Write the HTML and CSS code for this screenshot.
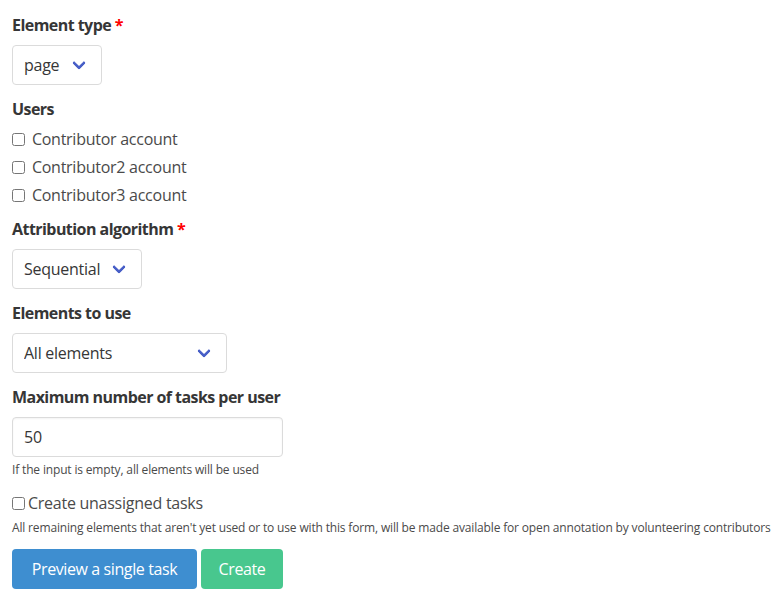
FILE: index.html
```html
<!DOCTYPE html>
<html lang="en">
<head>
<meta charset="utf-8">
<title>Create tasks</title>
<link rel="stylesheet" href="styles.css">
</head>
<body>
<form class="form">
  <div class="field">
    <label class="label">Element type <span class="req">*</span></label>
    <div class="select sel-type"><select><option>page</option></select></div>
  </div>

  <div class="field field-users">
    <label class="label label-tight">Users</label>
    <div class="checks">
      <label class="check"><input type="checkbox"> Contributor account</label>
      <label class="check"><input type="checkbox"> Contributor2 account</label>
      <label class="check"><input type="checkbox"> Contributor3 account</label>
    </div>
  </div>

  <div class="field">
    <label class="label">Attribution algorithm <span class="req">*</span></label>
    <div class="select sel-algo"><select><option>Sequential</option></select></div>
  </div>

  <div class="field">
    <label class="label">Elements to use</label>
    <div class="select sel-elements"><select><option>All elements</option></select></div>
  </div>

  <div class="field">
    <label class="label">Maximum number of tasks per user</label>
    <input class="input" type="number" value="50">
    <p class="help">If the input is empty, all elements will be used</p>
  </div>

  <div class="field">
    <label class="check check-single"><input type="checkbox">Create unassigned tasks</label>
    <p class="help help-nowrap">All remaining elements that aren't yet used or to use with this form, will be made available for open annotation by volunteering contributors</p>
  </div>

  <div class="buttons">
    <button type="button" class="button is-info">Preview a single task</button>
    <button type="button" class="button is-success">Create</button>
  </div>
</form>
</body>
</html>
```

FILE: styles.css
```css
*, *::before, *::after { box-sizing: border-box; }

body {
  margin: 0;
  background: #fff;
  color: #4a4a4a;
  font-family: "Open Sans", "Noto Sans", sans-serif;
  font-size: 16px;
  line-height: 1.5;
  letter-spacing: -0.26px;
}

.form {
  padding: 13px 12px;
}

.field {
  margin-bottom: 12px;
}

.field-users {
  margin-bottom: 8px;
}

.label {
  display: block;
  color: #363636;
  font-weight: 700;
  font-size: 16px;
  line-height: 24px;
  letter-spacing: -0.55px;
  margin-bottom: 8px;
}

.label-tight {
  margin-bottom: 0;
}

.req {
  color: #f00;
}

.select {
  position: relative;
  display: block;
  height: 40px;
}

.select::after {
  content: "";
  position: absolute;
  top: 50%;
  right: 18px;
  margin-top: -7px;
  width: 10px;
  height: 10px;
  border: 3px solid #485fc7;
  border-right: 0;
  border-top: 0;
  border-radius: 2px;
  transform: rotate(-45deg);
  transform-origin: center;
  pointer-events: none;
}

.select select {
  -webkit-appearance: none;
  appearance: none;
  display: block;
  width: 100%;
  height: 40px;
  margin: 0;
  padding: 0 40px 0 11px;
  border: 1px solid #dbdbdb;
  border-radius: 4px;
  background: #fff;
  color: #363636;
  font-family: inherit;
  font-size: 16px;
  letter-spacing: -0.26px;
  outline: none;
}

.sel-type { width: 90px; }
.sel-algo { width: 130px; }
.sel-elements { width: 215px; }

.checks {
  padding-top: 4px;
}

.check {
  display: flex;
  align-items: center;
  height: 28px;
  color: #4a4a4a;
  white-space: pre;
}

.check input {
  width: 13px;
  height: 13px;
  margin: 0 3px 0 0;
}

.check-single {
  height: 24px;
}

.input {
  display: block;
  width: 271px;
  height: 40px;
  margin: 0;
  padding: 0 11px;
  border: 1px solid #dbdbdb;
  border-radius: 4px;
  background: #fff;
  color: #363636;
  font-family: inherit;
  font-size: 16px;
  letter-spacing: -0.26px;
  box-shadow: inset 0 1px 2px rgba(10, 10, 10, 0.05);
  -moz-appearance: textfield;
}

.input::-webkit-outer-spin-button,
.input::-webkit-inner-spin-button {
  -webkit-appearance: none;
  margin: 0;
}

.help {
  margin: 4px 0 0;
  font-size: 12px;
  line-height: 18px;
  letter-spacing: -0.16px;
  color: #4a4a4a;
}

.help-nowrap {
  white-space: nowrap;
}

.buttons {
  display: flex;
  gap: 4px;
}

.button {
  height: 40px;
  padding: 0;
  border: 1px solid transparent;
  border-radius: 4px;
  color: #fff;
  font-family: inherit;
  font-size: 16px;
  line-height: 1.5;
  letter-spacing: -0.4px;
  white-space: nowrap;
  cursor: pointer;
}

.is-info {
  background: #3e8ed0;
  width: 185px;
}

.is-success {
  background: #48c78e;
  width: 82px;
}
```
